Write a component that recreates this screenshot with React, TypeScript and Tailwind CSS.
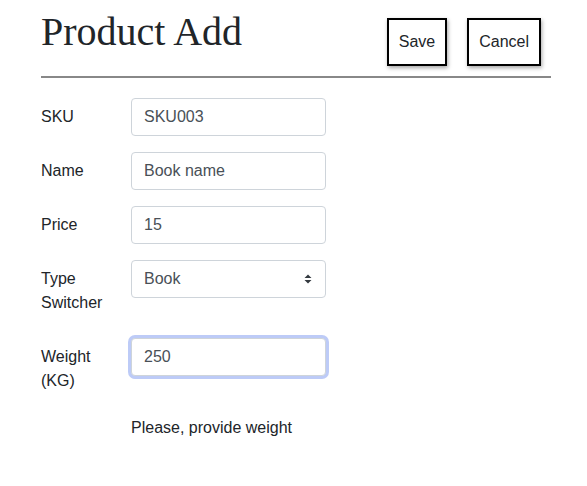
const FIELDS = [
  { label: "SKU", value: "SKU003" },
  { label: "Name", value: "Book name" },
  { label: "Price", value: "15" },
];

const inputCls =
  "h-[38px] w-[195px] rounded-[4px] border border-[#ced4da] bg-white px-3 text-[16px] text-[#495057] outline-none";

function Row({ label, children }: { label: string; children: React.ReactNode }) {
  return (
    <div className="mb-4 flex items-start">
      <label className="w-[90px] shrink-0 py-[7px] pr-3 leading-6">{label}</label>
      {children}
    </div>
  );
}

export default function App() {
  return (
    <div className="min-h-[486px] bg-white font-['Liberation_Sans',Arial,sans-serif] text-[16px] text-[#212529]">
      <div className="w-[551px] pl-[41px]">
        {/* Header */}
        <div className="flex items-start justify-between pr-[10px]">
          <h1 className="mt-[8px] font-['Liberation_Serif','Times_New_Roman',serif] text-[40px] leading-[48px]">
            Product Add
          </h1>
          <div className="mt-[18px] flex gap-5">
            <button className="h-12 border-2 border-black bg-white px-[10px] leading-6 shadow-[1px_2px_4px_rgba(0,0,0,0.35)]">
              Save
            </button>
            <button className="h-12 border-2 border-black bg-white px-[10px] leading-6 shadow-[1px_2px_4px_rgba(0,0,0,0.35)]">
              Cancel
            </button>
          </div>
        </div>
        <div className="mt-[10px] h-[2px] bg-[#888888]" />

        {/* Form */}
        <form className="mt-5">
          {FIELDS.map((f) => (
            <Row key={f.label} label={f.label}>
              <input className={inputCls} defaultValue={f.value} readOnly />
            </Row>
          ))}
          <Row label="Type Switcher">
            <div className={`${inputCls} flex items-center justify-between pr-3`}>
              <span>Book</span>
              <svg width="8" height="10" viewBox="0 0 8 10" className="mr-[1px]">
                <path d="M4 0.5 L7.5 4 H0.5 Z M4 9.5 L0.5 6 H7.5 Z" fill="#343a40" />
              </svg>
            </div>
          </Row>
          <Row label="Weight (KG)">
            <input
              className={`${inputCls} border-[#7f9ff0] shadow-[0_0_0_3px_rgba(90,125,235,0.4)]`}
              defaultValue="250"
              readOnly
            />
          </Row>
          <p className="pl-[90px] leading-6">Please, provide weight</p>
        </form>
      </div>
    </div>
  );
}
